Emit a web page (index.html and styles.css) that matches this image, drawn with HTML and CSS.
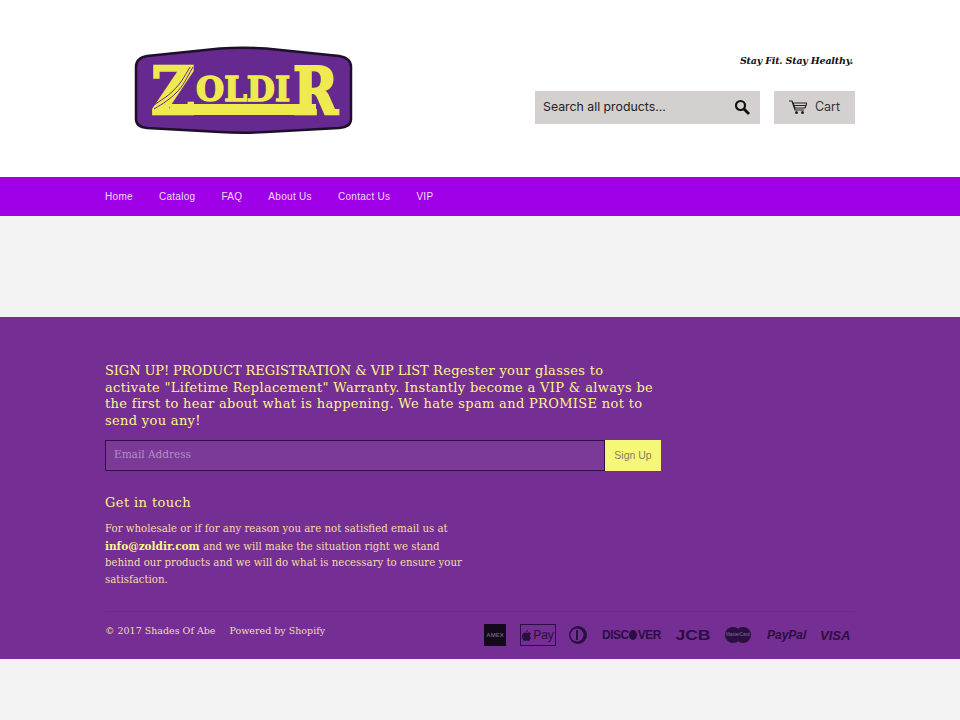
FILE: index.html
```html
<!DOCTYPE html>
<html lang="en">

<head>
    <meta charset="UTF-8">
    <meta name="viewport" content="width=device-width, initial-scale=1.0">
    <title>Zoldir</title>
    <link rel="stylesheet" href="styles.css">
</head>

<body>
    <header class="site-header">
        <div class="wrapper header-row">
            <a class="logo" href="#">
                <svg width="230" height="96" viewBox="0 0 230 96">
                    <path d="M6 24 Q6 15 17 13 L90 5.500 Q113 4 136 5.500 L209 13 Q221 15 221 24 L221 76 Q221 84 209 85 L136 89 Q113 90.500 90 89 L17 85 Q6 84 6 76 Z" fill="#65298f" stroke="#1e1028" stroke-width="2.500"/>
                    <rect x="40" y="61" width="146" height="11" fill="#eeea4f"/>
                    <text class="logo-big" x="21" y="71" textLength="44" lengthAdjust="spacingAndGlyphs">Z</text>
                    <text class="logo-small" x="66" y="58" textLength="94" lengthAdjust="spacingAndGlyphs">OLDI</text>
                    <text class="logo-big" x="163" y="71" textLength="45" lengthAdjust="spacingAndGlyphs">R</text>
                    <path d="M63 24 C56 36 54 42 46 50 C40 56 34 60 24 66 M60 24 C53 36 51 40 43 48 C37 54 31 57 24 62" fill="none" stroke="#65298f" stroke-width="1"/>
                </svg>
            </a>
            <div class="header-right">
                <p class="tagline">Stay Fit. Stay Healthy.</p>
                <div class="header-tools">
                    <form class="search">
                        <span class="search-text">Search all products...</span>
                        <svg class="search-icon" width="16" height="16" viewBox="0 0 16 16">
                            <circle cx="6.500" cy="6.500" r="4.500" fill="none" stroke="#111" stroke-width="2.200"/>
                            <path d="M10 10 L15 15" stroke="#111" stroke-width="2.800"/>
                        </svg>
                    </form>
                    <a class="cart" href="#">
                        <svg width="18" height="14" viewBox="0 0 18 14">
                            <path d="M0 1 H3 L6 10 H15" fill="none" stroke="#222" stroke-width="1.200"/>
                            <path d="M4 3 H18 L16 8 H6 Z" fill="none" stroke="#222" stroke-width="1.200"/>
                            <path d="M5 5.500 H17" stroke="#222"/>
                            <circle cx="7.500" cy="12.500" r="1.500" fill="#222"/>
                            <circle cx="13.500" cy="12.500" r="1.500" fill="#222"/>
                        </svg>
                        <span>Cart</span>
                    </a>
                </div>
            </div>
        </div>
    </header>

    <nav class="site-nav">
        <ul class="wrapper nav-list">
            <li><a href="#">Home</a></li>
            <li><a href="#">Catalog</a></li>
            <li><a href="#">FAQ</a></li>
            <li><a href="#">About Us</a></li>
            <li><a href="#">Contact Us</a></li>
            <li><a href="#">VIP</a></li>
        </ul>
    </nav>

    <main class="main-content"></main>

    <footer class="site-footer">
        <div class="wrapper">
            <div class="signup">
                <h3><span class="signup-caps">SIGN UP! PRODUCT REGISTRATION &amp; VIP LIST</span> Regester your glasses to activate "Lifetime Replacement" Warranty. Instantly become a VIP &amp; always be the first to hear about what is happening. We hate spam and PROMISE not to send you any!</h3>
                <form class="signup-form">
                    <span class="signup-input">Email Address</span>
                    <button type="button">Sign Up</button>
                </form>
            </div>
            <div class="contact">
                <h4>Get in touch</h4>
                <p>For wholesale or if for any reason you are not satisfied email us at <b>info@zoldir.com</b> and we will make the situation right we stand behind our products and we will do what is necessary to ensure your satisfaction.</p>
            </div>
            <div class="footer-bottom">
                <div class="copyright">
                    <span>© 2017 Shades Of Abe</span>
                    <span>Powered by Shopify</span>
                </div>
                <div class="payments">
                    <span class="pay-amex">AMEX</span>
                    <span class="pay-apple">
                        <svg width="9" height="11" viewBox="0 0 9 11">
                            <path d="M6 0 C6 1.500 5 2.500 4 2.500 C4 1.500 5 .3 6 0 Z M4.500 3 C5.500 3 6 2.500 7 2.500 C8 2.500 8.500 3 9 3.700 C7.300 4.700 7.500 7 9 7.700 C8.500 9 7.500 11 6.500 11 C5.700 11 5.300 10.500 4.500 10.500 C3.700 10.500 3.300 11 2.500 11 C1.300 11 0 8.500 0 6.500 C0 4 1.500 2.500 3 2.500 C3.500 2.500 4 3 4.500 3 Z" fill="#2a1040"/>
                        </svg>
                        Pay
                    </span>
                    <svg class="pay-diners" width="20" height="18" viewBox="0 0 20 18">
                        <circle cx="10" cy="9" r="9" fill="#2a1040"/>
                        <circle cx="9" cy="9" r="6.500" fill="#752e94"/>
                        <rect x="8" y="4" width="2" height="10" fill="#2a1040"/>
                    </svg>
                    <span class="pay-discover">DISC<i></i>VER</span>
                    <span class="pay-jcb">JCB</span>
                    <span class="pay-master"><i></i><i></i><b>MasterCard</b></span>
                    <span class="pay-paypal">PayPal</span>
                    <span class="pay-visa">VISA</span>
                </div>
            </div>
        </div>
    </footer>

    <div class="page-end"></div>
</body>

</html>
```

FILE: styles.css
```css
* {
    box-sizing: border-box;
}

body {
    margin: 0;
    background-color: #f3f3f3;
    font-family: "DejaVu Serif", serif;
}

a {
    color: inherit;
    text-decoration: none;
}

.wrapper {
    width: 750px;
    margin: 0 auto;
}

.site-header {
    height: 177px;
    background-color: #fff;
}

.header-row {
    display: flex;
    justify-content: space-between;
}

.logo {
    display: block;
    margin: 43px 0 0 25px;
}

.logo svg {
    display: block;
}

.logo-small {
    font-family: "DejaVu Serif", serif;
    font-weight: bold;
    font-size: 33px;
    fill: #eeea4f;
    stroke: #eeea4f;
    stroke-width: 1.500px;
}

.logo-big {
    font-family: "DejaVu Serif", serif;
    font-weight: bold;
    font-size: 66px;
    fill: #eeea4f;
    stroke: #eeea4f;
    stroke-width: 2.500px;
}

.header-right {
    display: flex;
    flex-direction: column;
    align-items: flex-end;
    padding-top: 54px;
}

.tagline {
    margin: 0 2px 0 0;
    font-size: 9.500px;
    line-height: 14px;
    font-weight: bold;
    font-style: italic;
    letter-spacing: -.2px;
    color: #111;
}

.header-tools {
    display: flex;
    gap: 14px;
    margin-top: 23px;
}

.search {
    display: flex;
    align-items: center;
    justify-content: space-between;
    width: 225px;
    height: 33px;
    padding: 0 10px 2px 8px;
    background-color: #d4d0d0;
}

.search-text {
    font-family: Inter, sans-serif;
    font-size: 12.300px;
    color: #222;
}

.cart {
    display: flex;
    align-items: center;
    justify-content: center;
    gap: 8px;
    width: 81px;
    height: 33px;
    padding-bottom: 2px;
    background-color: #d4d0d0;
    font-family: Inter, sans-serif;
    font-size: 12.500px;
    color: #333;
}

.site-nav {
    height: 39px;
    background-color: #a000e8;
}

.nav-list {
    display: flex;
    gap: 26px;
    height: 38px;
    padding: 0;
    list-style: none;
    align-items: center;
    font-family: "Liberation Sans", Arial, sans-serif;
    font-size: 10px;
    letter-spacing: .3px;
    color: #f3dcf5;
}

.main-content {
    height: 101px;
}

.site-footer {
    height: 342px;
    padding-top: 46px;
    background-color: #752e94;
    color: #f7ee8e;
}

.signup {
    width: 556px;
}

.signup h3 {
    margin: 0;
    font-size: 13px;
    line-height: 16.500px;
    font-weight: normal;
    letter-spacing: .33px;
    color: #fbf885;
}

.signup-caps {
    letter-spacing: -.1px;
}

.signup-form {
    display: flex;
    margin-top: 11px;
}

.signup-input {
    flex: 1;
    height: 31px;
    padding-left: 8px;
    border: 1px solid #2f0f45;
    background-color: #7b3a98;
    font-size: 10.500px;
    line-height: 27px;
    color: #b58dc5;
}

.signup-form button {
    width: 56px;
    height: 31px;
    padding: 0 0 2px;
    border: none;
    background-color: #f6f678;
    font-family: "Liberation Sans", Arial, sans-serif;
    font-size: 10.500px;
    color: #85805a;
}

.contact {
    width: 365px;
    margin-top: 23px;
}

.contact h4 {
    margin: 0;
    font-size: 13px;
    line-height: 17px;
    font-weight: normal;
    letter-spacing: .4px;
    color: #f9f294;
}

.contact p {
    margin: 10px 0 0;
    font-size: 10.200px;
    line-height: 16.500px;
    color: #f2dfa5;
}

.contact b {
    font-size: 10.500px;
    color: #fbf885;
}

.footer-bottom {
    display: flex;
    justify-content: space-between;
    align-items: flex-start;
    margin-top: 23px;
    padding-top: 12px;
    border-top: 1px solid #6c2a8a;
}

.copyright {
    display: flex;
    gap: 14px;
    font-size: 9.500px;
    line-height: 14px;
    color: #f2dfa5;
}

.payments {
    display: flex;
    align-items: center;
    height: 22px;
    gap: 14px;
    margin-right: 5px;
    color: #2a1040;
    font-family: "Liberation Sans", Arial, sans-serif;
    font-weight: bold;
}

.pay-amex {
    display: block;
    width: 22px;
    height: 22px;
    background-color: #14091c;
    font-size: 6px;
    line-height: 22px;
    text-align: center;
    color: #6e5a78;
}

.pay-apple {
    display: flex;
    align-items: center;
    justify-content: center;
    gap: 2px;
    width: 36px;
    height: 22px;
    border: 1px solid #2a1040;
    font-weight: normal;
    font-size: 12px;
}

.pay-diners {
    margin-left: -2px;
}

.pay-discover {
    display: flex;
    align-items: center;
    justify-content: center;
    width: 59px;
    font-size: 12px;
    letter-spacing: -.5px;
}

.pay-discover i {
    width: 10px;
    height: 10px;
    margin: 0 .5px;
    border-radius: 50%;
    background-color: #2a1040;
}

.pay-jcb {
    width: 36px;
    font-size: 14px;
    text-align: center;
    transform: scaleX(1.250);
}

.pay-master {
    position: relative;
    display: flex;
    width: 26px;
    height: 16px;
}

.pay-master i {
    width: 16px;
    height: 16px;
    border-radius: 50%;
    background-color: #2a1040;
}

.pay-master i + i {
    margin-left: -6px;
}

.pay-master b {
    position: absolute;
    top: 5px;
    left: 1px;
    font-size: 4.500px;
    font-weight: normal;
    color: #8a6a98;
}

.pay-paypal {
    width: 39px;
    margin-left: 2px;
    font-size: 12px;
    font-style: italic;
}

.pay-visa {
    width: 30px;
    font-size: 13px;
    font-style: italic;
}

.page-end {
    height: 61px;
}
```
